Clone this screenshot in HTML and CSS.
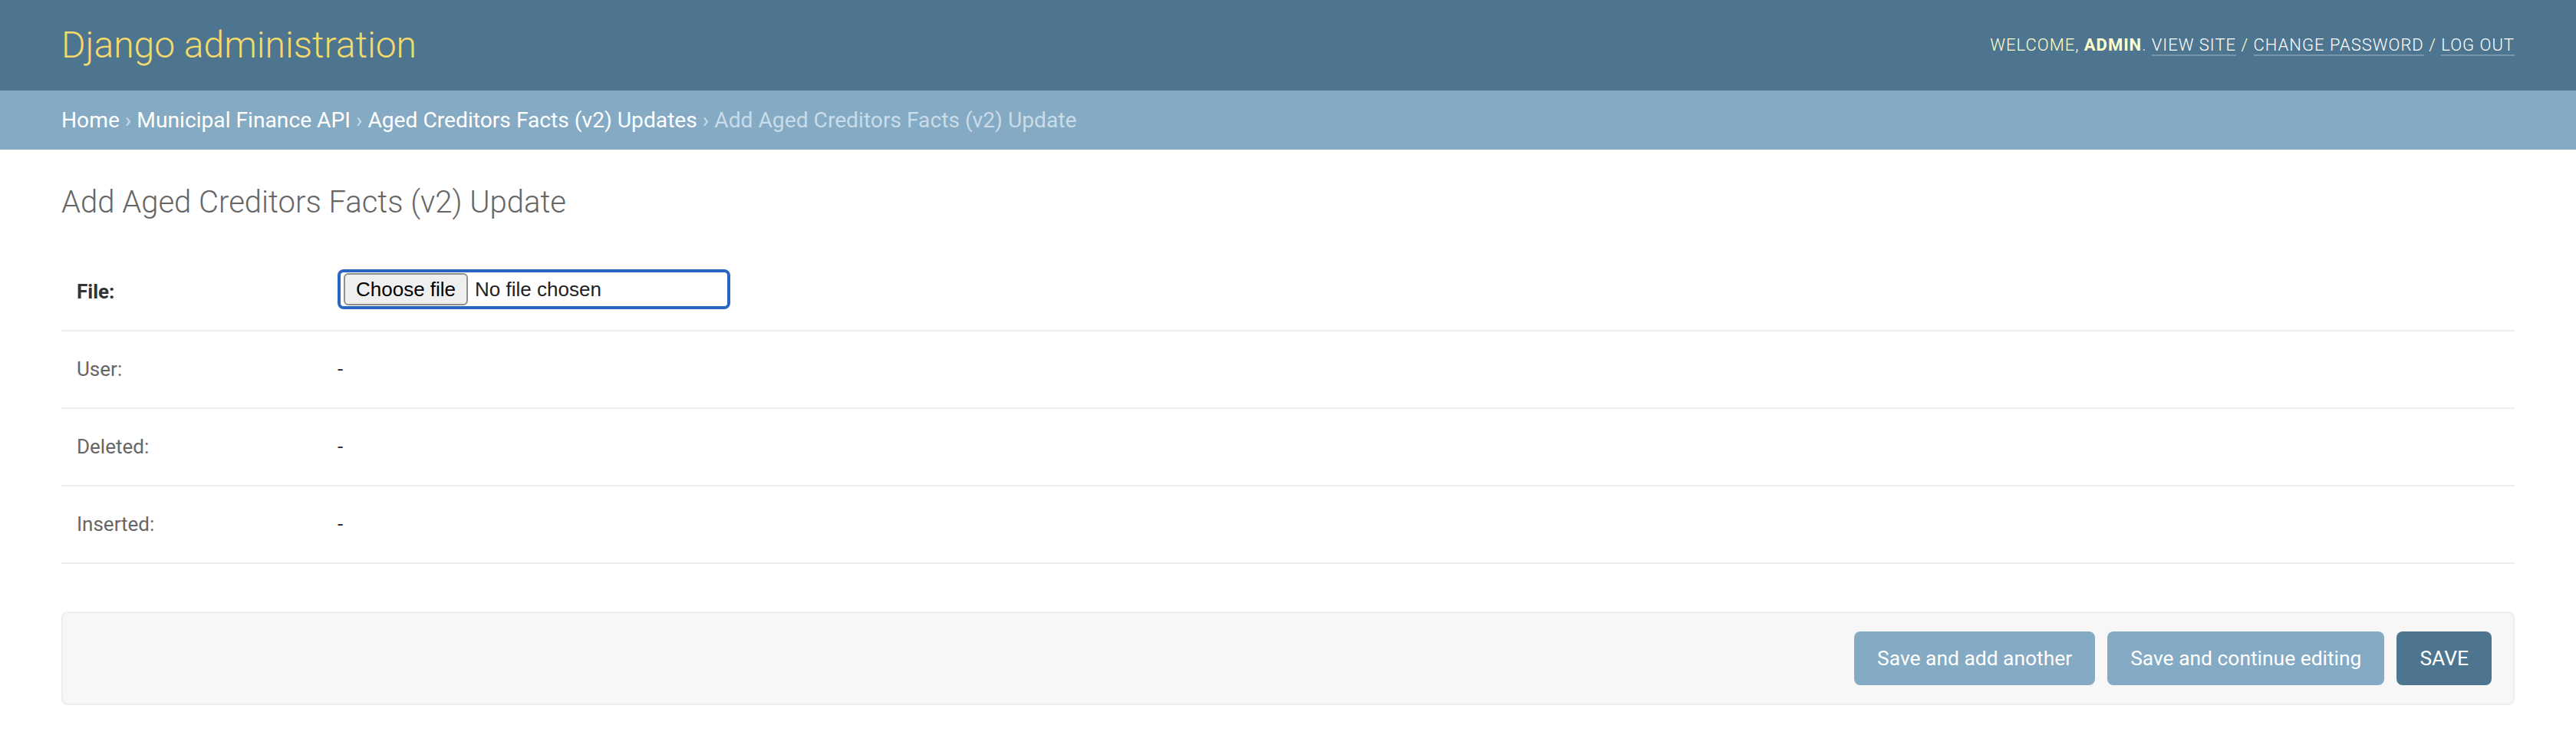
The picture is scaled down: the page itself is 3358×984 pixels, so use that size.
FILE: index.html
```html
<!DOCTYPE html>
<html lang="en">
<head>
<meta charset="utf-8">
<title>Add Aged Creditors Facts (v2) Update | Django site admin</title>
<link rel="stylesheet" href="styles.css">
</head>
<body>
<div class="container">
  <header class="header">
    <div class="branding">
      <h1 class="site-name"><a href="#">Django administration</a></h1>
    </div>
    <div class="user-tools">
      Welcome, <strong>admin</strong>. <a href="#">View site</a> / <a href="#">Change password</a> / <a href="#">Log out</a>
    </div>
  </header>
  <nav class="breadcrumbs">
    <a href="#">Home</a> › <a href="#">Municipal Finance API</a> › <a href="#">Aged Creditors Facts (v2) Updates</a> › Add Aged Creditors Facts (v2) Update
  </nav>
  <main class="content">
    <h1 class="page-title">Add Aged Creditors Facts (v2) Update</h1>
    <form>
      <fieldset class="module">
        <div class="form-row form-row-file">
          <label class="required">File:</label>
          <div class="file-input">
            <span class="file-button">Choose file</span>
            <span class="file-name">No file chosen</span>
          </div>
        </div>
        <div class="form-row">
          <label>User:</label>
          <div class="readonly">-</div>
        </div>
        <div class="form-row">
          <label>Deleted:</label>
          <div class="readonly">-</div>
        </div>
        <div class="form-row">
          <label>Inserted:</label>
          <div class="readonly">-</div>
        </div>
      </fieldset>
      <div class="submit-row">
        <button type="button" class="btn">Save and add another</button>
        <button type="button" class="btn">Save and continue editing</button>
        <button type="button" class="btn btn-default">Save</button>
      </div>
    </form>
  </main>
</div>
</body>
</html>
```
FILE: styles.css
```css
* {
  box-sizing: border-box;
}

body {
  margin: 0;
  padding: 0;
  font-family: Roboto, "Liberation Sans", sans-serif;
  color: #333;
  background: #fff;
}

a {
  text-decoration: none;
}

.header {
  display: flex;
  justify-content: space-between;
  align-items: center;
  height: 118px;
  padding: 0 80px;
  background: #4e7590;
}

.site-name {
  margin: 0;
  font-size: 48px;
  font-weight: 300;
  line-height: 56px;
}

.site-name a {
  color: #f3da6a;
}

.user-tools {
  font-size: 22px;
  font-weight: 300;
  letter-spacing: 1px;
  line-height: 26px;
  text-transform: uppercase;
  color: #ffc;
  text-align: right;
}

.user-tools strong {
  font-weight: 700;
}

.user-tools a {
  color: #fff;
  border-bottom: 2px solid rgba(255, 255, 255, 0.25);
}

.breadcrumbs {
  height: 77px;
  padding: 0 80px;
  background: #84aac4;
  color: #c9dce8;
  font-size: 28.2px;
  line-height: 77px;
}

.breadcrumbs a {
  color: #fff;
}

.content {
  padding: 40px 80px;
}

.page-title {
  margin: 0 0 39px;
  font-size: 40px;
  font-weight: 300;
  line-height: 57px;
  color: #666;
}

.module {
  margin: 0 0 62px;
  padding: 0;
  border: 0;
  min-width: 0;
}

.form-row {
  display: flex;
  align-items: flex-start;
  padding: 20px;
  border-bottom: 2px solid #eee;
  font-size: 26px;
}

.form-row label {
  flex: none;
  width: 340px;
  padding: 12px 20px 12px 0;
  line-height: 35px;
  color: #666;
}

.form-row label.required {
  font-weight: 700;
  color: #333;
}

.readonly {
  padding: 12px 0;
  line-height: 35px;
  color: #333;
}

.file-input {
  display: flex;
  align-items: center;
  width: 512px;
  height: 52px;
  margin-bottom: 5px;
  padding: 0 4px;
  border: 4px solid #2a64c5;
  border-radius: 8px;
  font-family: "Liberation Sans", Arial, sans-serif;
  font-size: 26px;
}

.file-button {
  display: flex;
  align-items: center;
  height: 42px;
  padding: 0 14px;
  background: #efefef;
  border: 2px solid #8f8f8f;
  border-radius: 6px;
  color: #000;
}

.file-name {
  margin-left: 9px;
  color: #222;
}

.submit-row {
  display: flex;
  justify-content: flex-end;
  gap: 16px;
  padding: 24px 28px;
  background: #f7f7f7;
  border: 2px solid #eee;
  border-radius: 8px;
}

.btn {
  height: 70px;
  padding: 0 30px;
  border: 0;
  border-radius: 8px;
  background: #84aac4;
  color: #fff;
  font-family: Roboto, "Liberation Sans", sans-serif;
  font-size: 26.4px;
  font-weight: 400;
}

.btn-default {
  background: #4e7590;
  text-transform: uppercase;
}
```
